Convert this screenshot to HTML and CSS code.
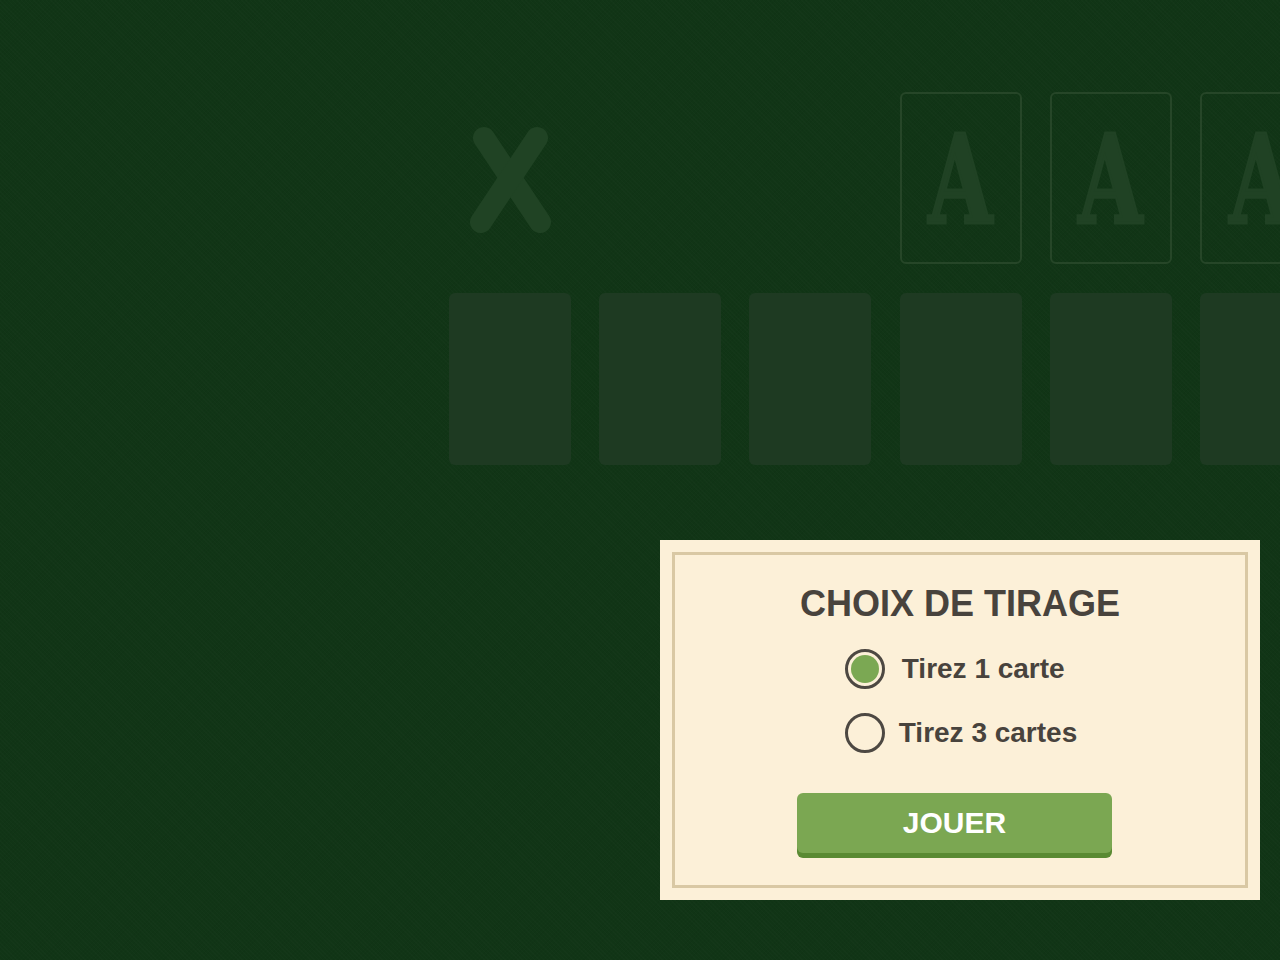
FILE: index.html
```html
<!DOCTYPE html>
<html lang="fr">
<head>
<meta charset="utf-8">
<title>Solitaire</title>
<link rel="stylesheet" href="styles.css">
</head>
<body>
<div class="table">
  <div class="board">
    <div class="row top-row">
      <div class="slot stock">
        <svg class="stock-x" width="122" height="172" viewBox="0 0 122 172">
          <line x1="35" y1="46" x2="91" y2="130"/>
          <line x1="88" y1="46" x2="32" y2="130"/>
        </svg>
      </div>
      <div class="slot waste"></div>
      <div class="slot empty"></div>
      <div class="slot foundation"><span class="ace">A</span></div>
      <div class="slot foundation"><span class="ace">A</span></div>
      <div class="slot foundation"><span class="ace">A</span></div>
      <div class="slot foundation"><span class="ace">A</span></div>
    </div>
    <div class="row tableau">
      <div class="slot pile"></div>
      <div class="slot pile"></div>
      <div class="slot pile"></div>
      <div class="slot pile"></div>
      <div class="slot pile"></div>
      <div class="slot pile"></div>
      <div class="slot pile"></div>
    </div>
  </div>

  <div class="dialog">
    <div class="frame">
      <h1 class="title">CHOIX DE TIRAGE</h1>
      <div class="options">
        <label class="option">
          <span class="radio checked"><span class="dot"></span></span>
          <span class="label one">Tirez 1 carte</span>
        </label>
        <label class="option">
          <span class="radio"></span>
          <span class="label">Tirez 3 cartes</span>
        </label>
      </div>
      <button class="play">JOUER</button>
    </div>
  </div>
</div>
</body>
</html>
```

FILE: styles.css
```css
html, body {
  margin: 0;
  padding: 0;
}

body {
  width: 1280px;
  height: 960px;
  overflow: hidden;
  background: #113516;
  font-family: "Liberation Sans", Arial, sans-serif;
}

.table {
  position: relative;
  width: 1280px;
  height: 960px;
  overflow: hidden;
  background-color: #113516;
  background-image:
    repeating-linear-gradient(45deg, rgba(255,255,255,0.012) 0 1px, transparent 1px 3px),
    repeating-linear-gradient(-45deg, rgba(0,0,0,0.03) 0 1px, transparent 1px 3px);
}

.board {
  display: flex;
  flex-direction: column;
  gap: 29px;
  padding: 92px 0 0 449px;
  width: 1100px;
}

.row {
  display: flex;
  gap: 28.2px;
}

.slot {
  flex: 0 0 122px;
  width: 122px;
  height: 172px;
  box-sizing: border-box;
  border-radius: 6px;
}

.stock {
  display: flex;
}

.stock-x line {
  stroke: #204324;
  stroke-width: 22;
  stroke-linecap: round;
}

.foundation {
  border: 2px solid #264628;
  display: flex;
  align-items: center;
  justify-content: center;
  overflow: hidden;
}

.ace {
  font-family: "DejaVu Serif Condensed", "DejaVu Serif", "Liberation Serif", serif;
  font-weight: bold;
  font-size: 124px;
  line-height: 1;
  color: #204224;
  -webkit-text-stroke: 3px #204224;
  transform: translateY(2px) scaleX(0.74);
}

.pile {
  background: #1e3a22;
}

.dialog {
  position: absolute;
  left: 660px;
  top: 540px;
  width: 600px;
  height: 360px;
  box-sizing: border-box;
  padding: 12px;
  background: #fcf0d8;
}

.frame {
  height: 100%;
  box-sizing: border-box;
  border: 3px solid #d9c8a4;
  display: flex;
  flex-direction: column;
  align-items: center;
  padding-top: 31px;
  color: #48433d;
}

.title {
  margin: 0;
  font-size: 36px;
  line-height: 1;
  font-weight: bold;
  color: #48433d;
}

.options {
  margin-top: 27px;
  display: flex;
  flex-direction: column;
  gap: 24px;
  margin-left: 2px;
}

.option {
  display: flex;
  align-items: center;
  gap: 14px;
  height: 40px;
}

.radio {
  width: 40px;
  height: 40px;
  box-sizing: border-box;
  border: 3px solid #4d4842;
  border-radius: 50%;
  padding: 3px;
  display: flex;
}

.dot {
  flex: 1;
  border-radius: 50%;
  background: #7ba853;
}

.label {
  font-size: 28px;
  line-height: 1;
  font-weight: bold;
  color: #48433d;
}

.label.one {
  margin-left: 3px;
}

.play {
  margin-top: 40px;
  margin-right: 11px;
  width: 315px;
  height: 60px;
  border: 0;
  border-radius: 6px;
  background: #7ba752;
  box-shadow: 0 5px 0 #5a8a33;
  color: #ffffff;
  font-family: "Liberation Sans", Arial, sans-serif;
  font-weight: bold;
  font-size: 30px;
  line-height: 1;
  padding: 0;
}
```
